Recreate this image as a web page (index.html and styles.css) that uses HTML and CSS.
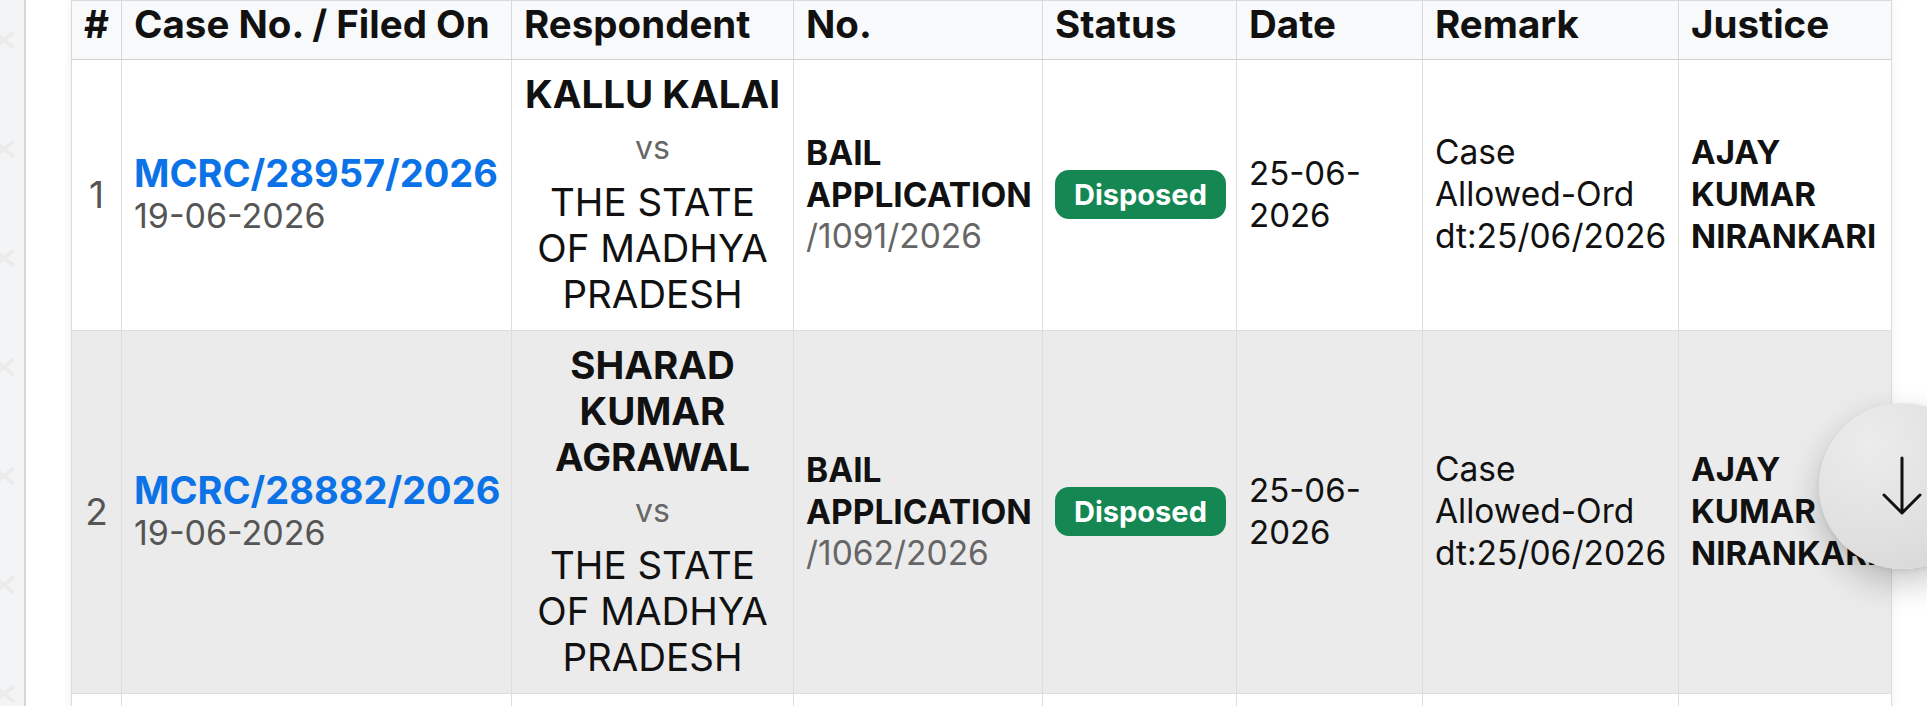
FILE: index.html
```html
<!DOCTYPE html>
<html lang="en">
<head>
<meta charset="utf-8">
<title>Cases</title>
<link rel="stylesheet" href="styles.css">
</head>
<body>
<div class="page">
  <aside class="rail">
    <svg class="rail-x" viewBox="0 0 20 20"><path d="M-6 2 L14 18 M14 2 L-6 18"/></svg>
    <svg class="rail-x" viewBox="0 0 20 20"><path d="M-6 2 L14 18 M14 2 L-6 18"/></svg>
    <svg class="rail-x" viewBox="0 0 20 20"><path d="M-6 2 L14 18 M14 2 L-6 18"/></svg>
    <svg class="rail-x" viewBox="0 0 20 20"><path d="M-6 2 L14 18 M14 2 L-6 18"/></svg>
    <svg class="rail-x" viewBox="0 0 20 20"><path d="M-6 2 L14 18 M14 2 L-6 18"/></svg>
    <svg class="rail-x" viewBox="0 0 20 20"><path d="M-6 2 L14 18 M14 2 L-6 18"/></svg>
    <svg class="rail-x" viewBox="0 0 20 20"><path d="M-6 2 L14 18 M14 2 L-6 18"/></svg>
  </aside>
  <main class="main">
    <div class="table-wrap">
      <table class="cases">
        <colgroup>
          <col class="c-idx"><col class="c-case"><col class="c-party"><col class="c-no"><col class="c-status"><col class="c-date"><col class="c-remark"><col class="c-justice">
        </colgroup>
        <thead>
          <tr>
            <th class="th-idx">#</th>
            <th>Case No. / Filed On</th>
            <th>Respondent</th>
            <th>No.</th>
            <th>Status</th>
            <th>Date</th>
            <th>Remark</th>
            <th>Justice</th>
          </tr>
        </thead>
        <tbody>
          <tr>
            <td class="idx">1</td>
            <td class="case"><a class="case-link" href="#">MCRC/28957/2026</a><div class="filed">19-06-2026</div></td>
            <td class="party"><div class="pet">KALLU KALAI</div><div class="vs">vs</div><div class="resp">THE STATE OF MADHYA PRADESH</div></td>
            <td class="no"><div class="no-type">BAIL APPLICATION</div><div class="no-num">/1091/2026</div></td>
            <td class="status"><span class="badge">Disposed</span></td>
            <td class="date">25-06-2026</td>
            <td class="remark">Case <span class="keep">Allowed-Ord</span> dt:25/06/2026</td>
            <td class="justice">AJAY KUMAR NIRANKARI</td>
          </tr>
          <tr class="alt">
            <td class="idx">2</td>
            <td class="case"><a class="case-link" href="#">MCRC/28882/2026</a><div class="filed">19-06-2026</div></td>
            <td class="party"><div class="pet">SHARAD KUMAR AGRAWAL</div><div class="vs">vs</div><div class="resp">THE STATE OF MADHYA PRADESH</div></td>
            <td class="no"><div class="no-type">BAIL APPLICATION</div><div class="no-num">/1062/2026</div></td>
            <td class="status"><span class="badge">Disposed</span></td>
            <td class="date">25-06-2026</td>
            <td class="remark">Case <span class="keep">Allowed-Ord</span> dt:25/06/2026</td>
            <td class="justice">AJAY KUMAR NIRANKARI</td>
          </tr>
          <tr class="row-blank">
            <td></td><td></td><td></td><td></td><td></td><td></td><td></td><td></td>
          </tr>
        </tbody>
      </table>
    </div>
  </main>
</div>
<button class="scroll-btn" type="button" aria-label="Scroll down">
  <svg viewBox="0 0 40 60" width="40" height="60"><path d="M20 2 V57 M2 39 L20 57 L38 39"/></svg>
</button>
</body>
</html>
```

FILE: styles.css
```css
* { box-sizing: border-box; }
html, body { margin: 0; padding: 0; }
body {
  background: #ffffff;
  font-family: Inter, "Noto Sans", "Liberation Sans", sans-serif;
  color: #111;
  overflow: hidden;
  height: 706px;
}
.page {
  display: flex;
  height: 706px;
}
.rail {
  width: 26px;
  flex: none;
  background: #f3f4f6;
  border-right: 2px solid #d6d6d6;
  display: flex;
  flex-direction: column;
  gap: 89px;
  padding-top: 30px;
  overflow: hidden;
}
.rail-x {
  width: 20px;
  height: 20px;
  flex: none;
}
.rail-x path {
  stroke: #ebebeb;
  stroke-width: 4;
  fill: none;
}
.main {
  flex: 1;
  padding-left: 45px;
}
.table-wrap {
  width: 1820px;
  box-shadow: 0 0 10px rgba(0,0,0,0.07);
}
.cases {
  width: 1820px;
  table-layout: fixed;
  border-collapse: collapse;
  border: 1px solid #d9d9d9;
}
.c-idx { width: 50px; }
.c-case { width: 390px; }
.c-party { width: 282px; }
.c-no { width: 249px; }
.c-status { width: 194px; }
.c-date { width: 186px; }
.c-remark { width: 256px; }
.c-justice { width: 213px; }

.cases th {
  background: #f8f9fa;
  font-size: 38.5px;
  font-weight: 700;
  text-align: left;
  line-height: 46px;
  padding: 0 12px 12px;
  border: 1px solid #d9d9d9;
  border-top: none;
  border-bottom: 1px solid #cfcfcf;
  white-space: nowrap;
}
.cases th.th-idx { text-align: center; padding: 0 0 12px; }
.cases td {
  border: 1px solid #dddddd;
  padding: 11px 12px 13px;
  vertical-align: middle;
}
.cases tr.alt td { background: #ebebeb; }
.row-blank td { height: 200px; }

.idx {
  text-align: center;
  font-size: 37px;
  color: #555;
  padding-left: 0 !important;
  padding-right: 0 !important;
}
.case-link {
  display: block;
  color: #0b72e7;
  font-weight: 700;
  font-size: 38px;
  line-height: 40px;
  text-decoration: none;
  white-space: nowrap;
}
.filed {
  font-size: 34px;
  line-height: 40px;
  padding-top: 3px;
  color: #555;
}
.party { text-align: center; }
.pet {
  font-size: 38.5px;
  font-weight: 700;
  line-height: 46px;
}
.vs {
  font-size: 32px;
  line-height: 40px;
  color: #666;
  padding: 11px 0;
}
.resp {
  font-size: 38.5px;
  line-height: 46px;
}
.no-type {
  font-size: 33.5px;
  font-weight: 700;
  line-height: 42px;
}
.no-num {
  font-size: 33.5px;
  line-height: 40px;
  color: #666;
}
.status { padding-left: 12px !important; }
.badge {
  display: inline-block;
  background: #148752;
  color: #fff;
  font-weight: 700;
  font-size: 29px;
  line-height: 49px;
  padding: 0 19px;
  border-radius: 14px;
  vertical-align: middle;
}
.date, .remark, .justice {
  font-size: 33px;
  line-height: 42px;
}
.remark { font-size: 33.5px; }
.keep { white-space: nowrap; }
.justice { font-weight: 700; }

.scroll-btn {
  position: fixed;
  top: 403px;
  right: -58px;
  width: 166px;
  height: 166px;
  border-radius: 50%;
  border: none;
  padding: 0;
  background: radial-gradient(circle at 30% 25%, #ececec 0%, #e0e0e0 55%, #d3d3d3 100%);
  box-shadow: 0 14px 34px rgba(0,0,0,0.22), 0 2px 6px rgba(0,0,0,0.08);
  display: flex;
  align-items: center;
  justify-content: flex-start;
  padding-left: 63px;
  cursor: pointer;
}
.scroll-btn svg path {
  stroke: #111;
  stroke-width: 3;
  fill: none;
  stroke-linecap: round;
  stroke-linejoin: round;
}
```
